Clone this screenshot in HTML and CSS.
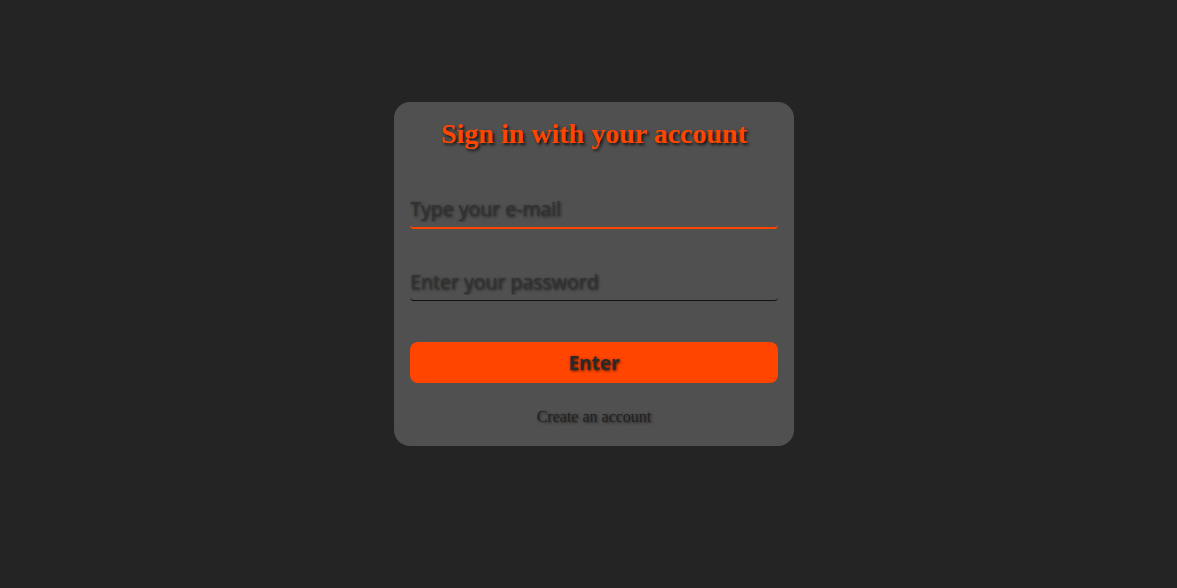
FILE: index.html
```html
<!DOCTYPE html>
<html lang="en">
<head>
<meta charset="utf-8">
<title>Sign in</title>
<link rel="stylesheet" href="styles.css">
</head>
<body>
<main class="page">
  <form class="card" onsubmit="return false">
    <h1 class="title">Sign in with your account</h1>
    <input class="field field-email" type="email" placeholder="Type your e-mail" autofocus>
    <input class="field field-password" type="password" placeholder="Enter your password">
    <button class="btn" type="submit">Enter</button>
    <a class="link" href="#">Create an account</a>
  </form>
</main>
</body>
</html>
```
FILE: styles.css
```css
html, body {
  margin: 0;
  padding: 0;
  height: 100%;
  background: #242424;
}
.page {
  display: flex;
  justify-content: center;
  padding-top: 102px;
  padding-left: 11px;
}
.card {
  width: 400px;
  box-sizing: border-box;
  background: #505050;
  border-radius: 16px;
  padding: 16px 16px 19px;
  display: flex;
  flex-direction: column;
}
.title {
  margin: 0;
  font-family: "Liberation Serif", serif;
  font-weight: bold;
  font-size: 28px;
  line-height: 32px;
  color: #ff4500;
  text-align: center;
  text-shadow: 2px 2px 3px rgba(0,0,0,0.75);
}
.field {
  display: block;
  width: 100%;
  box-sizing: border-box;
  height: 37px;
  margin: 0;
  padding: 0 0 3px;
  border: none;
  background: transparent;
  outline: none;
  font-family: "Open Sans", "Noto Sans", sans-serif;
  font-size: 19.5px;
  color: #333;
  text-shadow: 1px 1px 3px rgba(0,0,0,0.7);
  caret-color: #111;
  border-radius: 0 0 4px 4px;
}
.field::placeholder {
  color: #323232;
}
.field-email {
  margin-top: 42px;
  border-bottom: 2px solid #ff4500;
}
.field-password {
  margin-top: 35px;
  padding-bottom: 2px;
  border-bottom: 1px solid #111;
}
.btn {
  margin-top: 41px;
  height: 41px;
  border: none;
  border-radius: 8px;
  background: #ff4500;
  font-family: "Open Sans", "Noto Sans", sans-serif;
  font-weight: bold;
  font-size: 19px;
  color: #2a2a2a;
  text-shadow: 1px 1px 3px rgba(0,0,0,0.7);
  cursor: pointer;
}
.link {
  margin-top: 24px;
  font-family: "Liberation Serif", serif;
  font-size: 16px;
  line-height: 20px;
  color: #222;
  text-align: center;
  text-decoration: none;
  text-shadow: 1px 1px 3px rgba(0,0,0,0.6);
}
```
